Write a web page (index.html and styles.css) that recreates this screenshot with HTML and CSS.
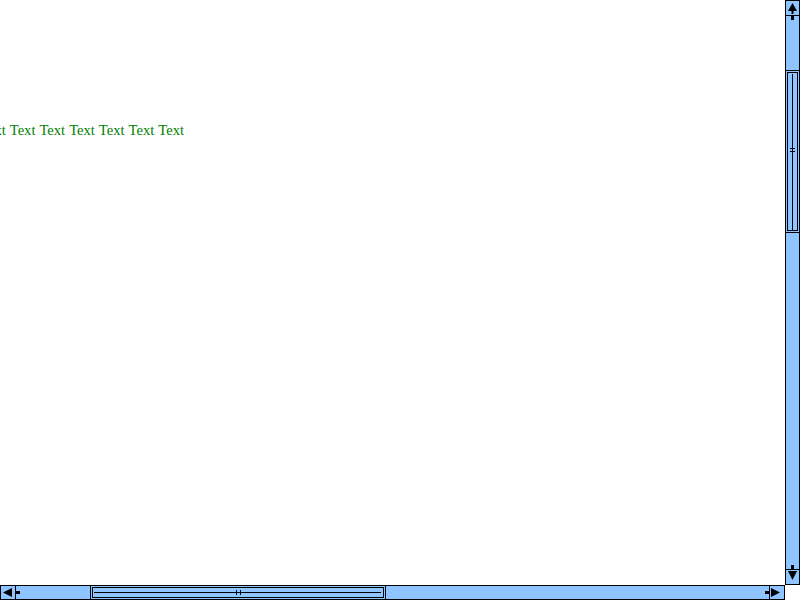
FILE: index.html
```html
<!DOCTYPE html>
<html>
<head>
<meta charset="utf-8">
<link rel="stylesheet" href="styles.css">
</head>
<body>
<div class="window">
  <div class="view">
    <div class="line"><span class="txt">Text Text Text Text Text Text Text Text Text Text Text Text Text Text Text Text Text Text Text Text</span></div>
  </div>
  <div class="vbar">
    <div class="btn btn-up">
      <svg width="9" height="11" viewBox="0 0 9 11"><polygon points="4.5,0 9,8 0,8" fill="#000"/><rect x="3.5" y="8" width="2" height="3" fill="#000"/></svg>
    </div>
    <div class="vtrough">
      <div class="stem-v"></div>
      <div class="vthumb">
        <div class="thumb-inner">
          <svg class="vgrip" width="9" height="156" viewBox="0 0 9 156" shape-rendering="crispEdges">
            <rect x="4" y="0" width="1" height="156" fill="#000"/>
            <rect x="2" y="74" width="5" height="1" fill="#000"/>
            <rect x="2" y="77" width="5" height="1" fill="#000"/>
          </svg>
        </div>
      </div>
      <div class="stem-v stem-end"></div>
    </div>
    <div class="btn btn-down">
      <svg width="9" height="9" viewBox="0 0 9 9"><polygon points="0,0 9,0 4.5,9" fill="#000"/></svg>
    </div>
  </div>
  <div class="hbar">
    <div class="hbtn hbtn-left">
      <svg width="9" height="9" viewBox="0 0 9 9"><polygon points="9,0 9,9 0,4.5" fill="#000"/></svg>
    </div>
    <div class="htrough">
      <div class="stem-h"></div>
      <div class="hthumb">
        <div class="thumb-inner">
          <svg class="hgrip" width="290" height="9" viewBox="0 0 290 9" shape-rendering="crispEdges">
            <rect x="0" y="4" width="288" height="1" fill="#000"/>
            <rect x="142" y="2" width="1" height="5" fill="#000"/>
            <rect x="147" y="2" width="1" height="5" fill="#000"/>
          </svg>
        </div>
      </div>
      <div class="stem-h stem-end"></div>
    </div>
    <div class="hbtn hbtn-right">
      <svg width="9" height="9" viewBox="0 0 9 9"><polygon points="0,0 9,4.5 0,9" fill="#000"/></svg>
    </div>
  </div>
  <div class="corner"></div>
</div>
</body>
</html>
```
FILE: styles.css
```css
html, body {
  margin: 0;
  padding: 0;
  background: #ffffff;
}
body {
  width: 800px;
  height: 600px;
  overflow: hidden;
}
.window {
  display: grid;
  grid-template-columns: 785px 15px;
  grid-template-rows: 585px 15px;
  width: 800px;
  height: 600px;
}
.view {
  overflow: hidden;
  padding-top: 122px;
  box-sizing: border-box;
  background: #ffffff;
}
.line {
  width: 184px;
  display: flex;
  justify-content: flex-end;
  overflow: hidden;
  white-space: nowrap;
  font-family: "Liberation Serif", "Times New Roman", serif;
  font-size: 14.6px;
  word-spacing: 0.6px;
  line-height: 17px;
  color: #008000;
}
.txt {
  flex: none;
}
.vbar {
  display: flex;
  flex-direction: column;
  border: 1px solid #000;
  background: #8ec4ff;
  box-sizing: border-box;
}
.btn {
  flex: none;
  height: 15px;
  box-sizing: border-box;
  display: flex;
  justify-content: center;
}
.btn svg {
  display: block;
}
.btn-up {
  border-bottom: 1px solid #000;
  align-items: flex-start;
  padding-top: 2px;
}
.btn-down {
  border-top: 1px solid #000;
  align-items: flex-start;
  padding-top: 1px;
}
.vtrough {
  flex: 1;
  display: flex;
  flex-direction: column;
  align-items: center;
}
.stem-v {
  flex: none;
  width: 3px;
  height: 4px;
  background: #000;
}
.stem-v.stem-end {
  margin-top: auto;
}
.vthumb {
  flex: none;
  align-self: stretch;
  margin-top: 50px;
  height: 163px;
  border-top: 1px solid #000;
  border-bottom: 1px solid #000;
  padding: 1px;
  box-sizing: border-box;
}
.thumb-inner {
  width: 100%;
  height: 100%;
  border: 1px solid #000;
  box-sizing: border-box;
  display: flex;
  align-items: center;
  justify-content: center;
}
.thumb-inner svg {
  display: block;
}
.hbar {
  display: flex;
  border: 1px solid #000;
  background: #8ec4ff;
  box-sizing: border-box;
}
.hbtn {
  flex: none;
  width: 15px;
  box-sizing: border-box;
  display: flex;
  align-items: center;
}
.hbtn svg {
  display: block;
}
.hbtn-left {
  border-right: 1px solid #000;
  padding-left: 2px;
}
.hbtn-right {
  border-left: 1px solid #000;
  padding-left: 1px;
}
.htrough {
  flex: 1;
  display: flex;
  align-items: center;
}
.stem-h {
  flex: none;
  width: 4px;
  height: 3px;
  background: #000;
}
.stem-h.stem-end {
  margin-left: auto;
}
.hthumb {
  flex: none;
  align-self: stretch;
  margin-left: 70px;
  width: 296px;
  border-left: 1px solid #000;
  border-right: 1px solid #000;
  padding: 1px;
  box-sizing: border-box;
}
.hgrip {
  margin-left: 1px;
}
.corner {
  background: #ffffff;
}
```
